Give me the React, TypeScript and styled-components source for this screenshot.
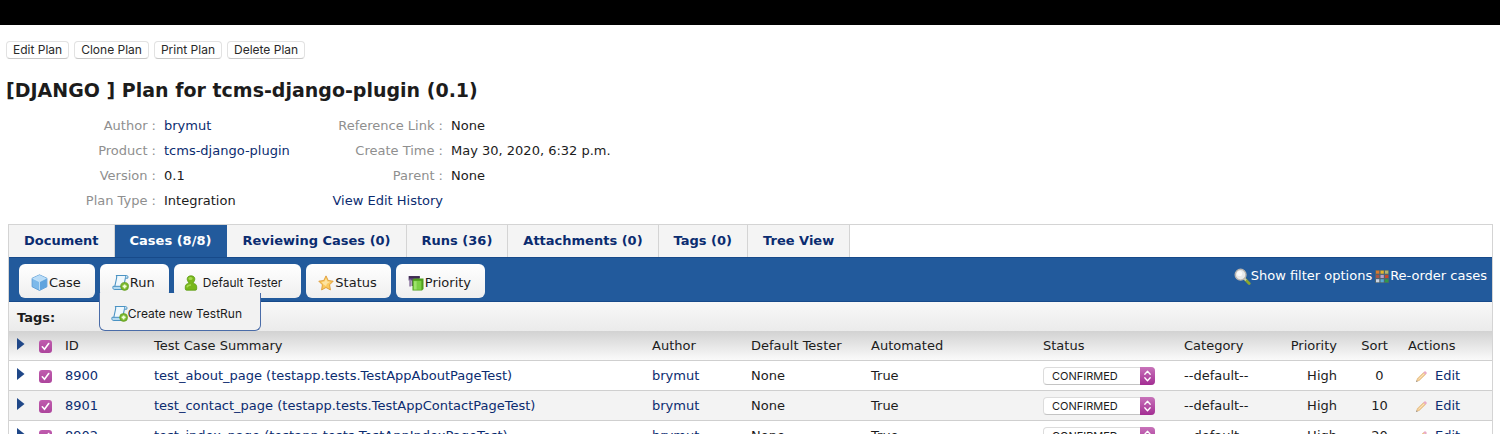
import React from 'react';
import styled, { createGlobalStyle } from 'styled-components';

const verdana = "Verdana, 'DejaVu Sans', sans-serif";
const system = "Inter, 'Liberation Sans', sans-serif";
const navy = '#0b2c70';
const blue = '#225a9c';

const GlobalStyle = createGlobalStyle`
  * { box-sizing: border-box; }
  body {
    margin: 0;
    background: #fff;
    color: #1c1c1c;
    font: 13px/16px ${verdana};
  }
  a { color: ${navy}; text-decoration: none; }
`;

const Page = styled.div`
  max-height: 100vh;
  overflow: hidden;
`;

const TopBar = styled.header`
  height: 25px;
  background: #000;
`;

const PlanActions = styled.div`
  display: flex;
  gap: 5px;
  padding: 16px 6px 0;
`;

const PlanButton = styled.button`
  height: 18px;
  padding: 0 6px;
  border: 1px solid #e2e2e2;
  border-bottom-color: #c8c8c8;
  border-radius: 4px;
  background: #fff;
  color: #2a2a2a;
  font: 12px/16px ${system};
`;

const Title = styled.h1`
  margin: 19px 6px 0;
  font: bold 19px/24px ${verdana};
`;

const Details = styled.div`
  display: grid;
  grid-template-columns: 156px 172px 115px 1fr;
  grid-auto-rows: 25px;
  align-items: center;
  margin-top: 11px;
`;

const DetailLabel = styled.span`
  text-align: right;
  white-space: nowrap;
  color: #8f8f8f;
`;

const DetailValue = styled.span`
  padding-left: 8px;
`;

const Panel = styled.section`
  margin: 11px 7px 0 8px;
  border: 1px solid #d4d4d4;
`;

const Tabs = styled.nav`
  display: flex;
  height: 32px;
`;

const Tab = styled.a<{ $active?: boolean }>`
  padding: 0 15px;
  border-right: 1px solid ${p => (p.$active ? blue : '#d4d4d4')};
  background: ${p => (p.$active ? blue : '#f4f4f4')};
  color: ${p => (p.$active ? '#fff' : navy)};
  font-weight: bold;
  line-height: 32px;
  white-space: nowrap;
`;

const Toolbar = styled.div`
  display: flex;
  justify-content: space-between;
  height: 45px;
  padding: 6px 5px 0 10px;
  border-top: 1px solid #174a8a;
  border-bottom: 1px solid #174a8a;
  background: ${blue};
`;

const ToolGroup = styled.div`
  display: flex;
  gap: 5px;
`;

const ToolButton = styled.button<{ $system?: boolean }>`
  display: flex;
  align-items: center;
  gap: ${p => (p.$system ? 5 : 1)}px;
  height: 34px;
  padding: ${p => (p.$system ? '3px 19px 0 10px' : '3px 14px 0 12px')};
  border: 0;
  border-radius: 6px;
  background: linear-gradient(#fff, #efefef);
  color: #1c1c1c;
  font: ${p => (p.$system ? `12px/16px ${system}` : `13px/16px ${verdana}`)};
  white-space: nowrap;
`;

const MenuAnchor = styled.div`
  position: relative;
`;

const Menu = styled.div`
  position: absolute;
  z-index: 1;
  top: 29px;
  left: -1px;
  padding: 12px 18px 8px 11px;
  border: 1px solid #4a6ca8;
  border-top: 0;
  border-radius: 0 0 6px 6px;
  background: #f2f2f2;
`;

const MenuItem = styled.button`
  display: flex;
  align-items: center;
  padding: 0;
  border: 0;
  background: none;
  color: #1c1c1c;
  font: 12px/16px ${system};
  white-space: nowrap;
`;

const FilterLinks = styled.div`
  display: flex;
  gap: 2px;
  height: 24px;
  align-items: center;
`;

const FilterLink = styled.a`
  display: flex;
  align-items: center;
  color: #fff;
`;

const TagsBar = styled.div`
  height: 29px;
  padding: 0 8px;
  background: linear-gradient(#f8f8f8, #ebebeb);
  font-weight: bold;
  line-height: 32px;
`;

const CaseTable = styled.table`
  width: 100%;
  table-layout: fixed;
  border-collapse: collapse;

  th, td {
    height: 30px;
    padding: 2px 0 0;
    border-bottom: 1px solid #cfcfcf;
    text-align: left;
    font-weight: normal;
    white-space: nowrap;
    vertical-align: middle;
  }
  th {
    height: 29px;
    background: linear-gradient(#d2d2d2, #fafafa);
  }
  tbody tr:nth-child(even) { background: #f3f3f3; }
  th:nth-child(10), td:nth-child(10) { text-align: right; }
  th:nth-child(11), td:nth-child(11) { text-align: center; }
  th:nth-child(11) { padding-left: 12px; }
  td:nth-child(11) { padding-left: 22px; }
  th:nth-child(12) { padding-left: 8px; }
  td:nth-child(12) { padding-left: 15px; }
`;

const Expander = styled.button`
  display: block;
  width: 8px;
  height: 16px;
  margin-left: 8px;
  padding: 0 0 4px;
  border: 0;
  background: none;

  svg { display: block; }
`;

const Tick = styled.label`
  display: block;
  position: relative;
  width: 13px;
  height: 13px;

  input {
    display: block;
    appearance: none;
    width: 13px;
    height: 13px;
    margin: 0;
    border-radius: 3px;
    background: linear-gradient(#bf5cae, #ad459c);
  }
  svg { position: absolute; inset: 0; pointer-events: none; }
`;

const StatusPicker = styled.div`
  position: relative;
  width: 112px;
  height: 18px;

  select {
    display: block;
    appearance: none;
    width: 100%;
    height: 100%;
    padding: 0 16px 0 8px;
    border: 1px solid #dcdcdc;
    border-bottom-color: #c4c4c4;
    border-radius: 4px;
    background: #fff;
    color: #1c1c1c;
    font: 11px/16px ${system};
  }
  svg { position: absolute; top: 0; right: 0; pointer-events: none; }
`;

const EditLink = styled.a`
  display: flex;
  align-items: center;
  gap: 7px;
`;

const CubeIcon = () => (
  <svg width="17" height="17" viewBox="0 0 16 16">
    <path d="M8 .8 15 4v8l-7 3.5L1 12V4z" fill="#7db9ea" stroke="#5a9bd3" strokeWidth=".8" />
    <path d="M8 1 14.6 4 8 7.2 1.4 4z" fill="#b9dcf7" />
    <path d="M8 7.3 14.6 4v7.9L8 15z" fill="#5fa4de" />
    <path d="M1.4 4 8 7.3V15M8 7.3 14.6 4" fill="none" stroke="#d4ebfb" strokeWidth=".7" />
  </svg>
);

const RunIcon = () => (
  <svg width="17" height="17" viewBox="0 0 17 17">
    <path d="M4.5 1.5h10.2c-1 .5-1.3 1.4-1.3 2.5l-1.8 9H2.7L4.6 4c.2-1.2.2-1.8-.1-2.5z" fill="#eff8fd" stroke="#4b93c3" strokeWidth="1.1" />
    <path d="M13.3 4.2h2.5c.4-1.5 0-2.6-1.1-2.7" fill="#cfe8f7" stroke="#4b93c3" />
    <path d="M1 12.3h10v3.2H2.2C1 15.3.5 13.8 1 12.3z" fill="#b4daf1" stroke="#4b93c3" />
    <circle cx="12.6" cy="12.4" r="4" fill="#79b62b" stroke="#5d991c" strokeWidth=".6" />
    <path d="M12.6 10.4v4M10.6 12.4h4" stroke="#f2ffd9" strokeWidth="1.7" />
  </svg>
);

const PersonIcon = () => (
  <svg width="14" height="16" viewBox="0 0 14 16">
    <path d="M4.6 7.2C3.6 6.2 3.2 5 3.2 3.9 3.2 2 4.8.8 7 .8s3.8 1.2 3.8 3.1c0 1.1-.4 2.3-1.4 3.3v1.2c2.2.3 3.3 1.6 3.3 3.4v2.1c0 .8-.6 1.3-1.4 1.3H2.7c-.8 0-1.4-.5-1.4-1.3v-2.1c0-1.8 1.1-3.1 3.3-3.4z" fill="#78b71b" stroke="#5b9a10" strokeWidth=".8" />
    <ellipse cx="6.5" cy="3.4" rx="2" ry="1.5" fill="#a5d750" />
    <path d="M3 12.4c.2-1.6 1.4-2.3 4-2.3" fill="none" stroke="#a5d750" strokeWidth="1.5" />
  </svg>
);

const StarIcon = () => (
  <svg width="16" height="16" viewBox="0 0 16 16">
    <path d="m8 .9 2.2 4.6 5 .7-3.6 3.6.8 5.1L8 12.5l-4.4 2.4.8-5.1L.8 6.2l5-.7z" fill="#fbc95d" stroke="#dd9a35" strokeWidth=".9" strokeLinejoin="round" />
    <path d="M8 3.2 9.4 6.4l3 .4L9 8.8 8 11 5.5 9.5 3.8 6.9l2.8-.5z" fill="#fde3a0" />
  </svg>
);

const PriorityIcon = () => (
  <svg width="16" height="16" viewBox="0 0 16 16">
    <path d="M.6 1h11v10h-8V5.5h-3z" fill="#5f4577" />
    <path d="M1 1.2h10.8v2H1z" fill="#3e2c50" />
    <path d="M1.2 4.5h2v7h-2z" fill="#9581a8" />
    <path d="M4.5 4.6 6 3.5h9.5v10.4L14 15.4H4.5z" fill="#4e9e1c" />
    <path d="M5.4 5.8h8v9h-8z" fill="#7bd044" />
    <path d="M6 6.2h2.6v8.2H6z" fill="#9ee26d" />
  </svg>
);

const LensIcon = () => (
  <svg width="17" height="17" viewBox="0 0 17 17">
    <path d="m10.6 10.8 4.6 4.6" stroke="#8aa62f" strokeWidth="2.8" strokeLinecap="round" />
    <path d="m10 10.2 2 2" stroke="#c9c9bb" strokeWidth="2" />
    <circle cx="6.6" cy="6.7" r="5.4" fill="#e9e9ea" stroke="#b9b4ae" strokeWidth="1.4" />
    <circle cx="5.6" cy="5.5" r="2.6" fill="#fafafa" />
  </svg>
);

const gridColours = ['#d9792b', '#e5b52c', '#b3b56b', '#a85546', '#b99fc7', '#c9472c', '#c9d4e6', '#5aa9d8', '#2f9a4a'];

const GridIcon = () => (
  <svg width="16" height="16" viewBox="0 0 16 16">
    <rect x="1" y="2" width="14" height="13" fill="#4d6470" />
    {gridColours.map((fill, i) => (
      <rect key={i} x={2 + (i % 3) * 4.5} y={2.6 + Math.floor(i / 3) * 4.3} width="3.3" height="3.1" fill={fill} />
    ))}
  </svg>
);

const PencilIcon = () => (
  <svg width="13" height="13" viewBox="0 0 13 13">
    <path d="m1.4 11.6 1-3.2L8.5 2.6l2 2-6.1 5.8z" fill="#f0c98f" stroke="#dcae76" strokeWidth=".5" />
    <path d="m8.3 2.6 1.2-1.1c.8-.7 2.8 1.1 2.1 2.1l-1 1.1z" fill="#e9aac6" />
    <path d="m3.5 9.3 5.7-5.5" stroke="#fae6c0" />
    <path d="m1.1 11.9.5-1.6 1.1 1.1z" fill="#8a8a8a" />
  </svg>
);

const ExpandArrow = () => (
  <Expander aria-label="Expand">
    <svg width="8" height="12" viewBox="0 0 8 12">
      <path d="M0 0 7.5 6 0 12z" fill="#1f4788" />
    </svg>
  </Expander>
);

const CheckBox = ({ label }: { label: string }) => (
  <Tick>
    <input type="checkbox" defaultChecked aria-label={label} />
    <svg width="13" height="13" viewBox="0 0 13 13">
      <path d="m3.3 6.8 2.2 2.4 4.2-5.7" fill="none" stroke="#fff" strokeWidth="1.6" strokeLinecap="round" />
    </svg>
  </Tick>
);

const StatusSelect = ({ label }: { label: string }) => (
  <StatusPicker>
    <select aria-label={label} defaultValue="CONFIRMED">
      <option>CONFIRMED</option>
    </select>
    <svg width="15" height="18" viewBox="0 0 15 18">
      <defs>
        <linearGradient id="stepper" x2="0" y2="1">
          <stop stopColor="#c873ba" />
          <stop offset="1" stopColor="#a32d93" />
        </linearGradient>
      </defs>
      <path d="M0 0h11a4 4 0 0 1 4 4v10a4 4 0 0 1-4 4H0z" fill="url(#stepper)" />
      <path d="m4.8 7.2 2.7-3 2.7 3M4.8 10.8l2.7 3 2.7-3" fill="none" stroke="#fff" strokeWidth="1.3" strokeLinecap="round" strokeLinejoin="round" />
    </svg>
  </StatusPicker>
);

const tabs = ['Document', 'Cases (8/8)', 'Reviewing Cases (0)', 'Runs (36)', 'Attachments (0)', 'Tags (0)', 'Tree View'];
const columnWidths = [30, 26, 89, 0, 99, 120, 172, 141, 80, 73, 63, 92];
const headings = ['ID', 'Test Case Summary', 'Author', 'Default Tester', 'Automated', 'Status', 'Category', 'Priority', 'Sort', 'Actions'];
const cases = [
  { id: 8900, summary: 'test_about_page (testapp.tests.TestAppAboutPageTest)', sort: 0 },
  { id: 8901, summary: 'test_contact_page (testapp.tests.TestAppContactPageTest)', sort: 10 },
  { id: 8902, summary: 'test_index_page (testapp.tests.TestAppIndexPageTest)', sort: 20 },
];

export default function App() {
  return (
    <Page>
      <GlobalStyle />
      <TopBar />
      <PlanActions>
        {['Edit Plan', 'Clone Plan', 'Print Plan', 'Delete Plan'].map(name => (
          <PlanButton key={name}>{name}</PlanButton>
        ))}
      </PlanActions>
      <Title>[DJANGO ] Plan for tcms-django-plugin (0.1)</Title>
      <Details>
        <DetailLabel>Author :</DetailLabel>
        <DetailValue><a href="#author">brymut</a></DetailValue>
        <DetailLabel>Reference Link :</DetailLabel>
        <DetailValue>None</DetailValue>
        <DetailLabel>Product :</DetailLabel>
        <DetailValue><a href="#product">tcms-django-plugin</a></DetailValue>
        <DetailLabel>Create Time :</DetailLabel>
        <DetailValue>May 30, 2020, 6:32 p.m.</DetailValue>
        <DetailLabel>Version :</DetailLabel>
        <DetailValue>0.1</DetailValue>
        <DetailLabel>Parent :</DetailLabel>
        <DetailValue>None</DetailValue>
        <DetailLabel>Plan Type :</DetailLabel>
        <DetailValue>Integration</DetailValue>
        <DetailLabel><a href="#history">View Edit History</a></DetailLabel>
      </Details>

      <Panel>
        <Tabs>
          {tabs.map((name, i) => (
            <Tab key={name} href="#tab" $active={i === 1}>{name}</Tab>
          ))}
        </Tabs>
        <Toolbar>
          <ToolGroup>
            <ToolButton><CubeIcon />Case</ToolButton>
            <MenuAnchor>
              <ToolButton><RunIcon />Run</ToolButton>
              <Menu>
                <MenuItem><RunIcon />Create new TestRun</MenuItem>
              </Menu>
            </MenuAnchor>
            <ToolButton $system><PersonIcon />Default Tester</ToolButton>
            <ToolButton><StarIcon />Status</ToolButton>
            <ToolButton><PriorityIcon />Priority</ToolButton>
          </ToolGroup>
          <FilterLinks>
            <FilterLink href="#filter"><LensIcon />Show filter options</FilterLink>
            <FilterLink href="#order"><GridIcon />Re-order cases</FilterLink>
          </FilterLinks>
        </Toolbar>
        <TagsBar>Tags:</TagsBar>
        <CaseTable>
          <colgroup>
            {columnWidths.map((w, i) => <col key={i} style={w ? { width: w } : undefined} />)}
          </colgroup>
          <thead>
            <tr>
              <th><ExpandArrow /></th>
              <th><CheckBox label="Select all cases" /></th>
              {headings.map(h => <th key={h}>{h}</th>)}
            </tr>
          </thead>
          <tbody>
            {cases.map(c => (
              <tr key={c.id}>
                <td><ExpandArrow /></td>
                <td><CheckBox label={`Select case ${c.id}`} /></td>
                <td><a href="#case">{c.id}</a></td>
                <td><a href="#case">{c.summary}</a></td>
                <td><a href="#author">brymut</a></td>
                <td>None</td>
                <td>True</td>
                <td><StatusSelect label={`Status of case ${c.id}`} /></td>
                <td>--default--</td>
                <td>High</td>
                <td>{c.sort}</td>
                <td><EditLink href="#edit"><PencilIcon />Edit</EditLink></td>
              </tr>
            ))}
          </tbody>
        </CaseTable>
      </Panel>
    </Page>
  );
}
